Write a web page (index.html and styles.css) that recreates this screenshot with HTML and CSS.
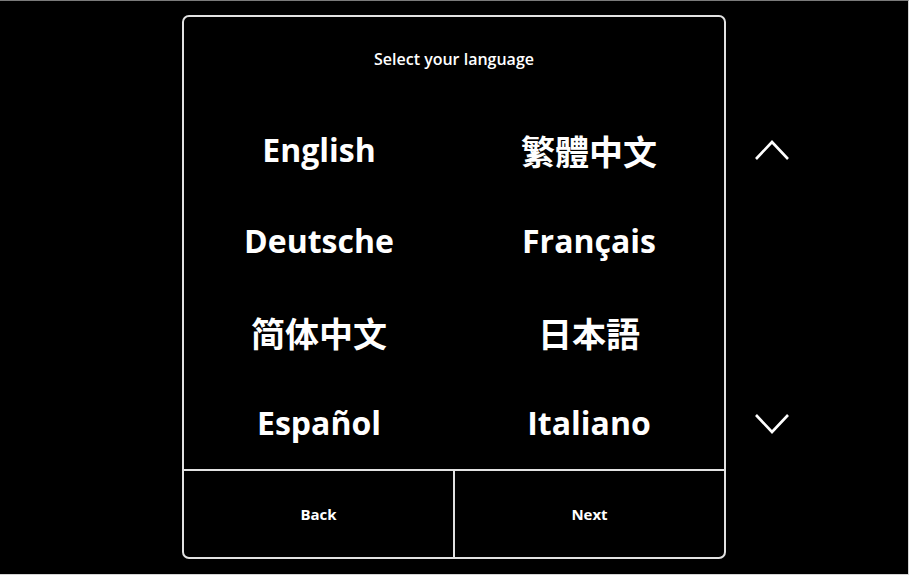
FILE: index.html
```html
<!DOCTYPE html>
<html lang="en">
<head>
<meta charset="utf-8">
<title>Select your language</title>
<link rel="stylesheet" href="styles.css">
</head>
<body>
<div class="screen">
  <div class="panel">
    <div class="title">Select your language</div>
    <div class="langs">
      <div class="lang">English</div>
      <div class="lang cjk tc" lang="zh-TW">繁體中文</div>
      <div class="lang">Deutsche</div>
      <div class="lang">Français</div>
      <div class="lang cjk sc" lang="zh-CN">简体中文</div>
      <div class="lang cjk jp" lang="ja">日本語</div>
      <div class="lang">Español</div>
      <div class="lang">Italiano</div>
    </div>
    <div class="footer">
      <div class="btn">Back</div>
      <div class="btn btn-right">Next</div>
    </div>
  </div>
  <div class="nav">
    <svg class="chev" width="36" height="20" viewBox="0 0 36 20"><polyline points="2,19 18,2 34,19" fill="none" stroke="#fff" stroke-width="2.6"/></svg>
    <svg class="chev" width="36" height="20" viewBox="0 0 36 20"><polyline points="2,1 18,18 34,1" fill="none" stroke="#fff" stroke-width="2.6"/></svg>
  </div>
</div>
</body>
</html>
```
FILE: styles.css
```css
html, body {
  margin: 0;
  padding: 0;
}
body {
  background: #000;
  height: 575px;
  box-sizing: border-box;
  border-top: 1px solid #7a7a7a;
  border-right: 1px solid #d4d4d4;
  border-bottom: 1px solid #d4d4d4;
  color: #fff;
  font-family: "Open Sans", "Noto Sans", sans-serif;
  overflow: hidden;
}
.screen {
  display: flex;
  padding: 14px 0 0 182px;
}
.panel {
  width: 544px;
  height: 544px;
  box-sizing: border-box;
  border: 2px solid #e2e2e2;
  border-radius: 7px;
  display: flex;
  flex-direction: column;
}
.title {
  padding-top: 31px;
  line-height: 22px;
  height: 22px;
  text-align: center;
  font-size: 16px;
  font-weight: 600;
}
.langs {
  margin-top: 35px;
  flex: 1;
  display: grid;
  grid-template-columns: 1fr 1fr;
  grid-template-rows: repeat(4, 1fr);
}
.lang {
  display: flex;
  align-items: center;
  justify-content: center;
  font-size: 32px;
  font-weight: 700;
  padding-bottom: 2px;
}
.cjk {
  font-size: 34px;
  padding-bottom: 0;
}
.tc { font-family: "Noto Sans CJK TC", sans-serif; }
.sc { font-family: "Noto Sans CJK SC", sans-serif; }
.jp { font-family: "Noto Sans CJK JP", sans-serif; }
.footer {
  height: 88px;
  box-sizing: border-box;
  border-top: 2px solid #e2e2e2;
  display: flex;
}
.btn {
  flex: 1;
  display: flex;
  align-items: center;
  justify-content: center;
  font-size: 15px;
  font-weight: 700;
  padding-bottom: 1px;
}
.btn-right {
  border-left: 2px solid #e2e2e2;
}
.nav {
  width: 92px;
  display: flex;
  flex-direction: column;
  align-items: center;
  padding-top: 125px;
  gap: 254px;
}
.chev {
  display: block;
}
```
